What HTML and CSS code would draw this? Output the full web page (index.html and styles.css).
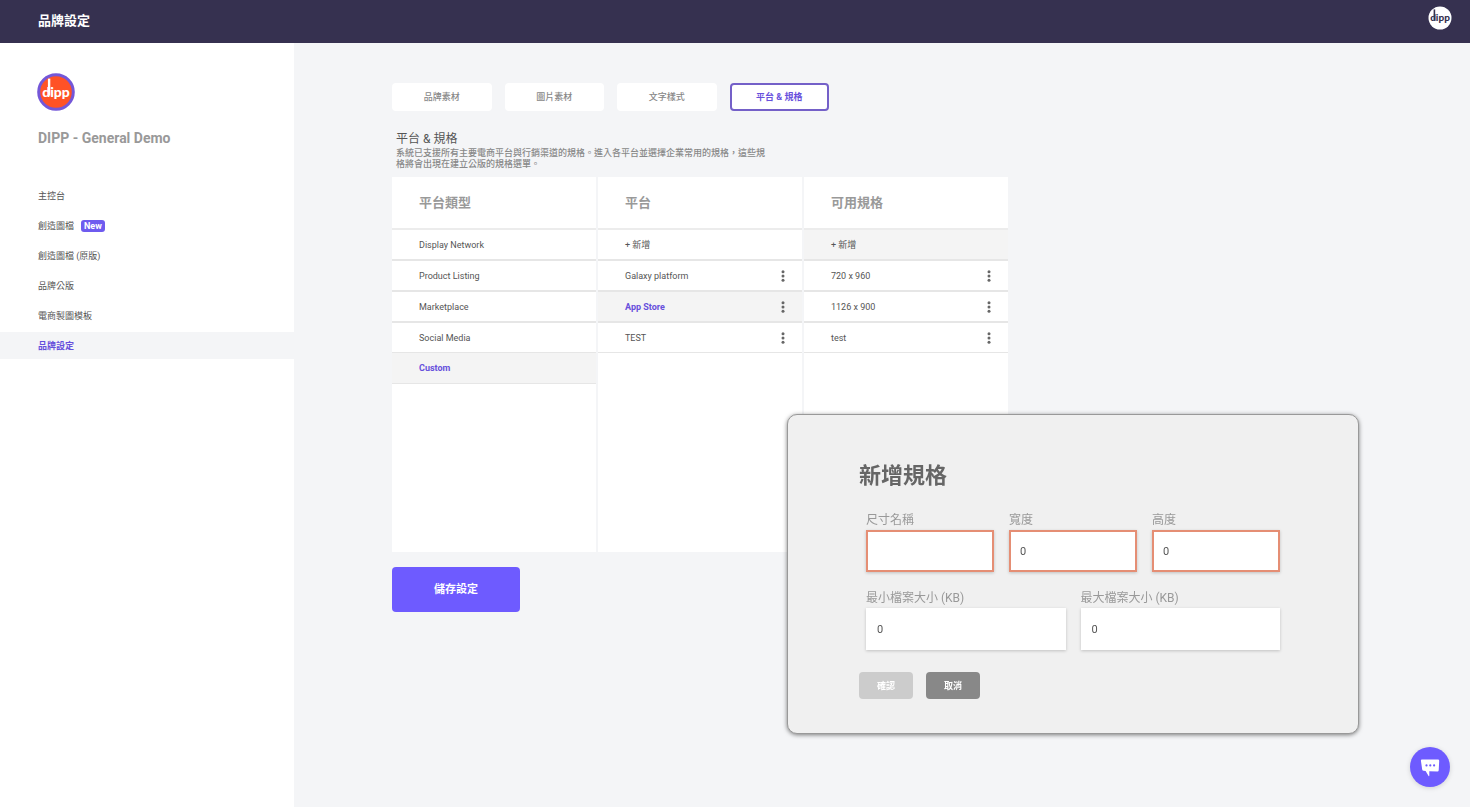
FILE: index.html
```html
<!DOCTYPE html>
<html lang="zh-Hant">
<head>
<meta charset="utf-8">
<meta name="viewport" content="width=device-width, initial-scale=1">
<title>品牌設定</title>
<link rel="stylesheet" href="styles.css">
</head>
<body>
<svg class="defs" aria-hidden="true">
  <symbol id="dots" viewBox="0 0 4 12"><circle cx="2" cy="1.7" r="1.5"/><circle cx="2" cy="6" r="1.5"/><circle cx="2" cy="10.3" r="1.5"/></symbol>
</svg>
<header class="topbar">
  <h1 class="topbar-title">品牌設定</h1>
  <svg class="account" viewBox="0 0 24 24" role="img" aria-label="dipp">
    <circle cx="12" cy="12" r="11.5" fill="#fff"/>
    <path d="M6.4 3.4v11" stroke="#363150" stroke-width="1.6"/>
    <text x="12" y="15" class="logo-text" fill="#363150">dipp</text>
  </svg>
</header>
<div class="layout">
  <aside class="sidebar">
    <svg class="brand-logo" viewBox="0 0 38 38" role="img" aria-label="dipp">
      <circle cx="19" cy="19" r="17.3" fill="#ff5226" stroke="#7457d8" stroke-width="3"/>
      <path d="M12.1 5.6v17" stroke="#fff" stroke-width="2.4"/>
      <text x="19" y="24" class="logo-text logo-text-large" fill="#fff">dipp</text>
    </svg>
    <h2 class="brand-name">DIPP - General Demo</h2>
    <nav class="menu">
      <a class="menu-item" href="#">主控台</a>
      <a class="menu-item" href="#">創造圖檔<span class="badge">New</span></a>
      <a class="menu-item" href="#">創造圖檔 (原版)</a>
      <a class="menu-item" href="#">品牌公版</a>
      <a class="menu-item" href="#">電商製圖模板</a>
      <a class="menu-item is-active" href="#">品牌設定</a>
    </nav>
  </aside>
  <main class="main">
    <div class="content">
      <div class="tabs">
        <button class="tab" type="button">品牌素材</button>
        <button class="tab" type="button">圖片素材</button>
        <button class="tab" type="button">文字樣式</button>
        <button class="tab is-active" type="button">平台 &amp; 規格</button>
      </div>
      <div class="intro">
        <h2 class="intro-title">平台 &amp; 規格</h2>
        <p class="intro-text">系統已支援所有主要電商平台與行銷渠道的規格。進入各平台並選擇企業常用的規格，這些規格將會出現在建立公版的規格選單。</p>
      </div>
      <div class="columns">
        <section class="column">
          <h3 class="column-title">平台類型</h3>
          <div class="row"><button class="row-name" type="button">Display Network</button></div>
          <div class="row"><button class="row-name" type="button">Product Listing</button></div>
          <div class="row"><button class="row-name" type="button">Marketplace</button></div>
          <div class="row"><button class="row-name" type="button">Social Media</button></div>
          <div class="row is-active"><button class="row-name" type="button">Custom</button></div>
        </section>
        <section class="column">
          <h3 class="column-title">平台</h3>
          <div class="row"><button class="row-name" type="button">+ 新增</button></div>
          <div class="row"><button class="row-name" type="button">Galaxy platform</button><button class="more" type="button" aria-label="更多"><svg><use href="#dots"/></svg></button></div>
          <div class="row is-active"><button class="row-name" type="button">App Store</button><button class="more" type="button" aria-label="更多"><svg><use href="#dots"/></svg></button></div>
          <div class="row"><button class="row-name" type="button">TEST</button><button class="more" type="button" aria-label="更多"><svg><use href="#dots"/></svg></button></div>
        </section>
        <section class="column">
          <h3 class="column-title">可用規格</h3>
          <div class="row is-open"><button class="row-name" type="button">+ 新增</button></div>
          <div class="row"><button class="row-name" type="button">720 x 960</button><button class="more" type="button" aria-label="更多"><svg><use href="#dots"/></svg></button></div>
          <div class="row"><button class="row-name" type="button">1126 x 900</button><button class="more" type="button" aria-label="更多"><svg><use href="#dots"/></svg></button></div>
          <div class="row"><button class="row-name" type="button">test</button><button class="more" type="button" aria-label="更多"><svg><use href="#dots"/></svg></button></div>
        </section>
      </div>
      <button class="save" type="button">儲存設定</button>
    </div>
  </main>
</div>
<form class="dialog" role="dialog" aria-labelledby="dialog-title">
  <h2 class="dialog-title" id="dialog-title">新增規格</h2>
  <div class="fields">
    <div class="field"><label for="size-name">尺寸名稱</label><input class="input is-invalid" id="size-name" type="text"></div>
    <div class="field"><label for="width">寬度</label><input class="input is-invalid" id="width" type="text" inputmode="numeric" value="0"></div>
    <div class="field"><label for="height">高度</label><input class="input is-invalid" id="height" type="text" inputmode="numeric" value="0"></div>
  </div>
  <div class="fields">
    <div class="field"><label for="min-size">最小檔案大小 (KB)</label><input class="input" id="min-size" type="text" inputmode="numeric" value="0"></div>
    <div class="field"><label for="max-size">最大檔案大小 (KB)</label><input class="input" id="max-size" type="text" inputmode="numeric" value="0"></div>
  </div>
  <div class="actions">
    <button class="action" type="submit" disabled>確認</button>
    <button class="action" type="button">取消</button>
  </div>
</form>
<button class="chat" type="button" aria-label="聊天">
  <svg viewBox="0 0 20 20"><path d="M2 2.4Q.7 2.4.9 3.7L2.2 12.4Q2.4 13.6 3.6 13.7L5.6 13.9 8.6 18.9Q9.2 19.7 9.3 18.6V14.2L17.5 14.4Q18.6 14.4 18.7 13.2L19.2 3.8Q19.2 2.4 18 2.4Z" fill="#fff"/><g fill="#6e5bff"><circle cx="6.5" cy="8.4" r="1.1"/><circle cx="10.3" cy="8.4" r="1.1"/><circle cx="14.1" cy="8.4" r="1.1"/></g></svg>
</button>
</body>
</html>
```
FILE: styles.css
```css
* {
  box-sizing: border-box;
}

body {
  margin: 0;
  min-height: 100vh;
  display: flex;
  flex-direction: column;
  background: #f4f5f7;
  color: #555;
  font-family: Roboto, "Noto Sans CJK TC", sans-serif;
  font-size: 9px;
  line-height: 12px;
}

h1, h2, h3, p {
  margin: 0;
}

button {
  border: 0;
  padding: 0;
  background: none;
  color: inherit;
  font: inherit;
  cursor: pointer;
}

.defs {
  position: absolute;
  width: 0;
  height: 0;
}

.topbar {
  display: flex;
  justify-content: space-between;
  align-items: flex-start;
  height: 43px;
  padding: 6px 18px 0 38px;
  background: #363150;
  color: #fff;
}

.topbar-title {
  font-size: 13px;
  line-height: 30px;
}

.account {
  width: 24px;
  height: 24px;
}

.logo-text {
  font: 900 10px Lato, sans-serif;
  text-anchor: middle;
}

.logo-text-large {
  font-size: 14px;
}

.layout {
  flex: 1;
  display: flex;
}

.sidebar {
  width: 20%;
  padding-top: 30px;
  background: #fff;
}

.brand-logo {
  display: block;
  width: 38px;
  height: 38px;
  margin-left: 37px;
}

.brand-name {
  margin: 17px 0 34px 38px;
  color: #999;
  font-size: 14px;
  line-height: 20px;
}

.menu {
  display: flex;
  flex-direction: column;
  gap: 3px;
}

.menu-item {
  display: flex;
  align-items: center;
  gap: 7px;
  height: 27px;
  padding-left: 38px;
  color: #555;
  text-decoration: none;
}

.menu-item.is-active {
  background: #f4f5f7;
  color: #6750dc;
  font-weight: 700;
}

.badge {
  padding: 0 3px;
  border-radius: 3px;
  background: #6e5bef;
  color: #fff;
  font-weight: 700;
}

.main {
  flex: 1;
  padding: 40px 98px;
}

.content {
  max-width: 616px;
}

.tabs {
  display: flex;
  gap: 13px;
  max-width: 437px;
}

.tab {
  flex: 1;
  height: 28px;
  border: 2px solid #fff;
  border-radius: 4px;
  background: #fff;
  color: #888;
  font-weight: 500;
}

.tab.is-active {
  border-color: #7460c8;
  color: #6750dc;
  font-weight: 700;
}

.intro {
  max-width: 380px;
  padding: 20px 4px 7px;
}

.intro-title {
  font-size: 12px;
  line-height: 17px;
  font-weight: 400;
}

.intro-text {
  color: #888;
  font-weight: 500;
  line-height: 11px;
}

.columns {
  display: flex;
  gap: 2px;
}

.column {
  flex: 1;
  min-height: 375px;
  background: #fff;
}

.column-title {
  height: 53px;
  padding-left: 27px;
  border-bottom: 2px solid #ececec;
  color: #999;
  font-size: 13px;
  line-height: 51px;
}

.row {
  display: flex;
  height: 31px;
  border-bottom: 2px solid #e6e6e6;
}

.row:nth-child(n + 5) {
  height: 30px;
  border-bottom-width: 1px;
}

.row:nth-child(6) {
  height: 31px;
}

.row-name {
  flex: 1;
  padding-left: 27px;
  padding-top: 1px;
  text-align: left;
}

.row.is-active,
.row.is-open {
  background: #f4f4f4;
}

.row.is-active .row-name {
  padding-top: 0;
  color: #6750dc;
  font-weight: 700;
}

.more {
  display: flex;
  justify-content: center;
  align-items: center;
  width: 38px;
}

.more svg {
  width: 4px;
  height: 12px;
  fill: #666;
}

.save {
  width: 128px;
  height: 45px;
  margin-top: 15px;
  border-radius: 4px;
  background: #6e5bff;
  color: #fff;
  font-size: 11px;
  font-weight: 700;
}

.dialog {
  position: fixed;
  right: 111px;
  bottom: 73px;
  width: 572px;
  padding: 45px 71px 34px;
  border: 1px solid #999;
  border-radius: 10px;
  background: #f0f0f0;
  box-shadow: 0 1px 4px rgba(0, 0, 0, 0.5);
}

.dialog-title {
  margin-bottom: 18px;
  color: #666;
  font-size: 22px;
  line-height: 32px;
}

.fields {
  display: flex;
  gap: 15px;
  margin-bottom: 16px;
  padding: 0 7px;
}

.field {
  flex: 1;
  min-width: 0;
  display: flex;
  flex-direction: column;
  color: #999;
  font-size: 12px;
  line-height: 20px;
}

.input {
  width: 100%;
  height: 42px;
  padding: 0 11px;
  border: 0;
  background: #fff;
  color: #555;
  font: inherit;
  font-size: 11px;
  box-shadow: 0 1px 3px rgba(0, 0, 0, 0.2);
}

.input.is-invalid {
  padding: 0 9px;
  border: 2px solid #e58e74;
}

.actions {
  display: flex;
  gap: 13px;
  padding-top: 6px;
}

.action {
  width: 54px;
  height: 27px;
  border-radius: 4px;
  background: #888;
  color: #fff;
  font-weight: 700;
}

.action:disabled {
  background: #ccc;
}

.chat {
  position: fixed;
  right: 20px;
  bottom: 20px;
  display: flex;
  justify-content: center;
  align-items: center;
  width: 40px;
  height: 40px;
  border-radius: 50%;
  background: #6e5bff;
  box-shadow: 0 1px 5px rgba(0, 0, 0, 0.15);
}

.chat svg {
  width: 20px;
  height: 20px;
}
```
